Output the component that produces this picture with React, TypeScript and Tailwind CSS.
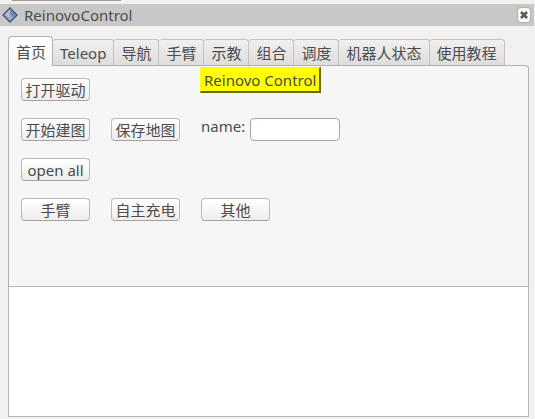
import { useState } from "react";
import type { ReactNode } from "react";

const tabs = ["首页", "Teleop", "导航", "手臂", "示教", "组合", "调度", "机器人状态", "使用教程"];

function PushButton({ children }: { children: ReactNode }) {
  return (
    <button
      type="button"
      className="flex h-[23px] w-[69px] shrink-0 items-center justify-center whitespace-nowrap rounded-[4px] border border-[#bcbab8] border-b-[#a5a3a1] bg-linear-to-b from-white to-[#efedec]"
    >
      {children}
    </button>
  );
}

function TitleBar() {
  return (
    <header className="mr-px flex h-[22px] shrink-0 items-center bg-[#c8c8c8] pr-1 pl-0.5">
      <svg className="size-4 shrink-0" viewBox="0 0 16 16" aria-hidden="true">
        <path d="M8 .9 15.1 8 8 15.1.9 8Z" fill="#8291b8" stroke="#3c4c74" strokeWidth="1.1" />
        <path d="M8 2.2 13.6 8 8 9Z" fill="#7685ae" />
        <path d="M8 2.2 2.4 8 6 10 8 8Z" fill="#b0bbd7" />
        <path d="M8 7 11 10.5 8 13.5 5 10.5Z" fill="#a3aecd" />
      </svg>
      <h1 className="ml-1.5 flex-1">ReinovoControl</h1>
      <button
        type="button"
        aria-label="Close"
        className="flex h-3.5 w-3 items-center justify-center rounded-[3px] bg-[#f8f8f7] shadow-[0_0_1px_1px_#b4b2b0]"
      >
        <svg className="size-2" viewBox="0 0 8 8" aria-hidden="true">
          <path d="M1 1 7 7M7 1 1 7" stroke="#5b5955" strokeWidth="2.6" />
        </svg>
      </button>
    </header>
  );
}

export default function App() {
  const [active, setActive] = useState(0);
  const [name, setName] = useState("");

  return (
    <div className="flex h-screen flex-col bg-[#f2f1f0] font-['Noto_Sans','Noto_Sans_CJK_SC',sans-serif] text-[15px] leading-5 text-[#4c4c4c]">
      <div className="h-1 shrink-0">
        <div className="ml-3 h-px w-[109px] bg-[#a09a96]" />
      </div>
      <TitleBar />
      <main className="flex flex-1 flex-col pt-2.5 pr-1.5 pb-0.5 pl-2">
        <div role="tablist" className="relative -mb-px flex shrink-0 items-end">
          {tabs.map((tab, i) => (
            <button
              key={tab}
              type="button"
              role="tab"
              aria-selected={i === active}
              onClick={() => setActive(i)}
              className={
                i === active
                  ? "h-[30px] whitespace-nowrap rounded-t-[4px] border border-b-0 border-[#b4b0ac] bg-linear-to-b from-white to-[#f6f6f6] pr-1.5 pl-[7px]"
                  : "mb-px h-[26px] whitespace-nowrap rounded-t-[3px] border-t border-r border-[#c4c1be] bg-linear-to-b from-[#f1f0ef] to-[#dfdddb] px-[7px]"
              }
            >
              {tab}
            </button>
          ))}
        </div>
        <section
          role="tabpanel"
          className="flex shrink-0 flex-col gap-[17px] rounded-tr-[4px] border border-b-0 border-[#b4b0ac] bg-[#f6f6f6] px-3 pt-px pb-[65px]"
        >
          <div className="flex items-end gap-[21px]">
            <PushButton>打开驱动</PushButton>
            <div className="mb-2 ml-[89px] border-t border-r-2 border-b-2 border-l border-t-[#ffff00] border-r-[#6b6b00] border-b-[#6b6b00] border-l-[#ffff00] bg-[#ffff00] px-[3px] pt-0.5 pb-px">
              Reinovo Control
            </div>
          </div>
          <div className="flex gap-[21px]">
            <PushButton>开始建图</PushButton>
            <PushButton>保存地图</PushButton>
            <div className="flex items-start">
              <label htmlFor="map-name" className="w-[49px] leading-4">
                name:
              </label>
              <input
                id="map-name"
                value={name}
                onChange={(e) => setName(e.target.value)}
                className="h-[23px] w-[90px] rounded-[4px] border border-[#aaa6a3] bg-white px-1 outline-none"
              />
            </div>
          </div>
          <div className="flex">
            <PushButton>open all</PushButton>
          </div>
          <div className="flex gap-[21px]">
            <PushButton>手臂</PushButton>
            <PushButton>自主充电</PushButton>
            <PushButton>其他</PushButton>
          </div>
        </section>
        <textarea
          readOnly
          aria-label="Output"
          className="block flex-1 resize-none border border-[#bab7b3] bg-white p-1 outline-none"
        />
      </main>
    </div>
  );
}
